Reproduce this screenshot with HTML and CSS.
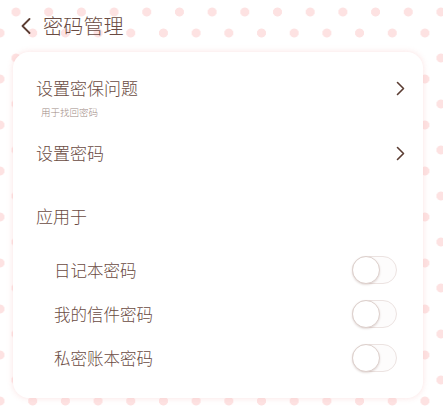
FILE: index.html
```html
<!DOCTYPE html>
<html lang="zh-CN">
<head>
  <meta charset="UTF-8">
  <title>密码管理</title>
  <link rel="stylesheet" href="styles.css">
</head>
<body>
  <header class="topbar">
    <svg class="back" width="10" height="16" viewBox="0 0 10 16">
      <polyline points="8.5,1 1.5,8 8.5,15" fill="none" stroke="#5b3d33" stroke-width="1.8" stroke-linecap="round" stroke-linejoin="round"/>
    </svg>
    <h1>密码管理</h1>
  </header>

  <div class="card">
    <div class="item">
      <div class="item-text">
        <div class="item-title">设置密保问题</div>
        <div class="item-sub">用于找回密码</div>
      </div>
      <svg class="arrow" width="9" height="15" viewBox="0 0 9 15">
        <polyline points="1.5,1.5 7.5,7.5 1.5,13.5" fill="none" stroke="#5b3d33" stroke-width="1.6" stroke-linecap="round" stroke-linejoin="round"/>
      </svg>
    </div>

    <div class="item item-plain">
      <div class="item-title">设置密码</div>
      <svg class="arrow" width="9" height="15" viewBox="0 0 9 15">
        <polyline points="1.5,1.5 7.5,7.5 1.5,13.5" fill="none" stroke="#5b3d33" stroke-width="1.6" stroke-linecap="round" stroke-linejoin="round"/>
      </svg>
    </div>

    <div class="section">应用于</div>

    <div class="switch-list">
      <div class="switch-row">
        <span>日记本密码</span>
        <label class="switch"><input type="checkbox"><span class="knob"></span></label>
      </div>
      <div class="switch-row">
        <span>我的信件密码</span>
        <label class="switch"><input type="checkbox"><span class="knob"></span></label>
      </div>
      <div class="switch-row">
        <span>私密账本密码</span>
        <label class="switch"><input type="checkbox"><span class="knob"></span></label>
      </div>
    </div>
  </div>
</body>
</html>
```

FILE: styles.css
```css
html, body {
  height: 100%;
}
body {
  margin: 0;
  font-family: "Noto Sans CJK SC", "Noto Sans", sans-serif;
  font-weight: 300;
  color: #6a4b42;
  background-color: #fff;
  background-image:
    radial-gradient(circle, #fde2e2 4.2px, transparent 4.8px),
    radial-gradient(circle, #fde2e2 4.2px, transparent 4.8px);
  background-size: 32.7px 46px;
  background-position: -16.35px 10px, -0.35px -11px;
  overflow: hidden;
}
.topbar {
  height: 52px;
  display: flex;
  align-items: center;
  padding-left: 21px;
  box-sizing: border-box;
}
.topbar h1 {
  margin: 0 0 0 12px;
  font-size: 20px;
  font-weight: 300;
  line-height: 28px;
  letter-spacing: 0.2px;
  color: #6a4b42;
}
.card {
  margin: 0 20px 0 13px;
  background: #fff;
  border-radius: 16px;
  box-shadow: 0 0 6px rgba(246, 190, 190, 0.45);
  padding: 20px 18px 18px 23px;
}
.item {
  display: flex;
  align-items: flex-start;
  justify-content: space-between;
}
.item .arrow {
  margin-top: 9px;
}
.item-title {
  font-size: 17px;
  line-height: 32px;
}
.item-sub {
  font-size: 9.5px;
  line-height: 16px;
  padding-left: 5px;
  color: #a08a84;
}
.item-plain {
  margin-top: 17px;
}
.section {
  margin-top: 31px;
  font-size: 17px;
  line-height: 32px;
}
.switch-list {
  margin-top: 16px;
}
.switch-row {
  height: 44px;
  display: flex;
  align-items: center;
  justify-content: space-between;
  padding: 0 8px 0 18px;
  font-size: 16.5px;
}
.switch {
  position: relative;
  width: 45px;
  height: 28px;
  box-sizing: border-box;
  border: 1px solid #ece3e1;
  border-radius: 14px;
  background: #fdfcfc;
}
.switch input {
  display: none;
}
.knob {
  position: absolute;
  left: -1px;
  top: -1px;
  width: 28px;
  height: 28px;
  box-sizing: border-box;
  border-radius: 50%;
  border: 1px solid #ddd0cc;
  background: #fff;
  box-shadow: 0 1px 2px rgba(120, 80, 70, 0.2);
}
```
